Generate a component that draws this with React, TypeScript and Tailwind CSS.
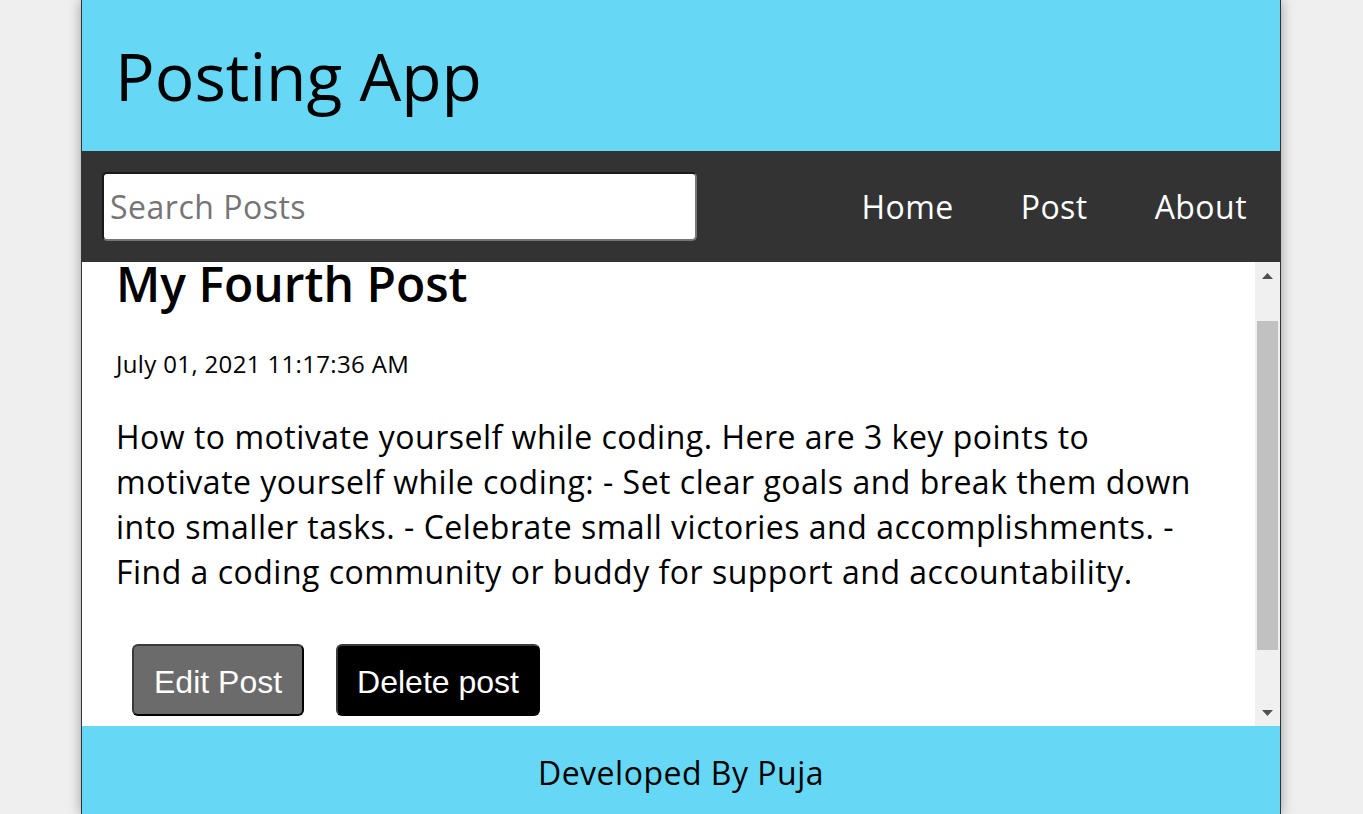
import React from "react";

export default function App() {
  const font = { fontFamily: '"Open Sans", "Noto Sans", sans-serif' };
  return (
    <div className="min-h-screen w-full bg-[#efefef] flex justify-center pr-[1px]" style={font}>
      <div className="w-[1200px] h-[814px] border-x border-[#333] bg-white flex flex-col shadow-[0_0_12px_rgba(0,0,0,0.35)] overflow-hidden">
        <header className="h-[151px] shrink-0 bg-[#66d8f5] flex items-center pl-[33px] pr-[34px]">
          <h1 className="text-[66px] font-normal text-black leading-normal m-0">Posting App</h1>
        </header>
        <nav className="h-[111px] shrink-0 bg-[#333333] flex items-center justify-between pl-[20px] pr-[33px]">
          <input
            type="text"
            placeholder="Search Posts"
            className="w-[595px] h-[69px] bg-white rounded-[5px] border-2 border-t-[#1a1a1a] border-l-[#1a1a1a] border-b-[#767676] border-r-[#767676] px-[6px] text-[32px] tracking-[0.5px] text-black placeholder:text-[#757575] outline-none"
            style={font}
          />
          <ul className="flex items-center gap-[67px] text-white text-[32px] tracking-[0.45px] leading-normal">
            <li>Home</li>
            <li>Post</li>
            <li>About</li>
          </ul>
        </nav>
        <main className="flex-1 flex min-h-0 bg-white">
          <div className="flex-1 overflow-hidden">
            <article className="mt-[-14px] px-[34px]">
              <h2 className="text-[48px] font-semibold leading-normal text-black">My Fourth Post</h2>
              <p className="mt-[26px] text-[24px] tracking-[0.35px] leading-normal text-black">July 01, 2021 11:17:36 AM</p>
              <p className="mt-[32px] text-[32px] tracking-[0.5px] leading-[45px] text-black">
                How to motivate yourself while coding. Here are 3 key points to motivate yourself while coding: - Set clear goals and break them down into smaller tasks. - Celebrate small victories and accomplishments. - Find a coding community or buddy for support and accountability.
              </p>
              <div className="mt-[50px] pl-[16px] flex gap-[32px]" style={{ fontFamily: '"Liberation Sans", Arial, sans-serif' }}>
                <button className="h-[72px] px-[20px] pt-[3px] bg-[#6b6b6b] text-white text-[32px] rounded-[6px] border-2 border-t-[#3a3a3a] border-l-[#3a3a3a] border-b-black border-r-black">
                  Edit Post
                </button>
                <button className="h-[72px] px-[19px] pt-[3px] bg-black text-white text-[32px] rounded-[6px] border-2 border-t-[#3a3a3a] border-l-[#3a3a3a] border-b-black border-r-black">
                  Delete post
                </button>
              </div>
            </article>
          </div>
          <div className="w-[25px] shrink-0 bg-[#f0f0f0] flex flex-col items-center">
            <div className="h-[25px] flex items-center justify-center pt-[2px]">
              <svg width="11" height="6" viewBox="0 0 11 6"><path d="M5.5 0 L11 6 L0 6 Z" fill="#505050" /></svg>
            </div>
            <div className="h-[34px]" />
            <div className="w-[21px] h-[329px] bg-[#c1c1c1]" />
            <div className="flex-1" />
            <div className="h-[25px] flex items-center justify-center pb-[2px]">
              <svg width="11" height="6" viewBox="0 0 11 6"><path d="M0 0 L11 0 L5.5 6 Z" fill="#505050" /></svg>
            </div>
          </div>
        </main>
        <footer className="h-[88px] shrink-0 bg-[#66d8f5] flex items-center justify-center pt-[5px]">
          <p className="text-[32px] tracking-[0.5px] text-black leading-normal">Developed By Puja</p>
        </footer>
      </div>
    </div>
  );
}
